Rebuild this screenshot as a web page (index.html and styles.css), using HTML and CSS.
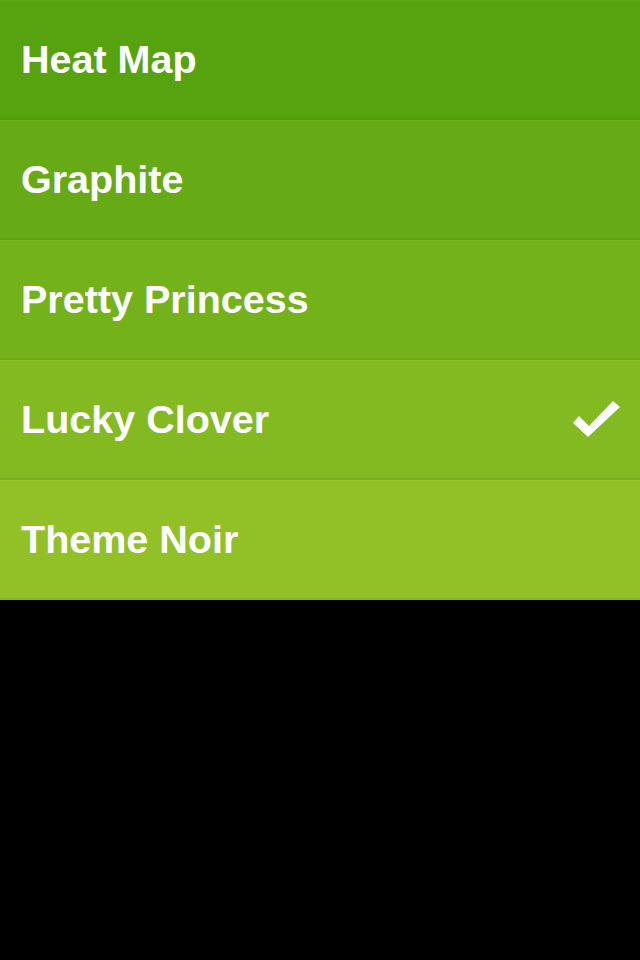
FILE: index.html
```html
<!DOCTYPE html>
<html>
<head>
<meta charset="utf-8">
<link rel="stylesheet" href="styles.css">
</head>
<body>
<ul class="list">
  <li class="row r1"><span class="label">Heat Map</span></li>
  <li class="row r2"><span class="label">Graphite</span></li>
  <li class="row r3"><span class="label">Pretty Princess</span></li>
  <li class="row r4"><span class="label">Lucky Clover</span>
    <svg class="check" width="48" height="40" viewBox="572 400 48 40"><polygon points="579,416 589,426 613,401 620,407 588,437 573,423" fill="#fff"/></svg>
  </li>
  <li class="row r5"><span class="label">Theme Noir</span></li>
</ul>
</body>
</html>
```
FILE: styles.css
```css
html, body {
  margin: 0;
  padding: 0;
  background: #000;
  width: 640px;
  height: 960px;
  overflow: hidden;
}
.list {
  list-style: none;
  margin: 0;
  padding: 0;
}
.row {
  box-sizing: border-box;
  height: 120px;
  display: flex;
  align-items: center;
  justify-content: space-between;
  padding: 0 20px 0 21px;
  border-top: 1px solid;
  border-bottom: 2px solid;
  font-family: "Liberation Sans", Arial, sans-serif;
  font-weight: bold;
  font-size: 39.5px;
  color: #fff;
}
.label { display: block; }
.check { display: block; margin-right: 0; }
.r1 { background: #57a30f; border-top-color: #5ba712; border-bottom-color: #509b0c; }
.r2 { background: #66ab16; border-top-color: #6ab01b; border-bottom-color: #5ea312; }
.r3 { background: #74b21c; border-top-color: #79b720; border-bottom-color: #6ca917; }
.r4 { background: #83ba22; border-top-color: #88be27; border-bottom-color: #79b01d; }
.r5 { background: #91c127; border-top-color: #95c42c; border-bottom-color: #85b821; }
```
